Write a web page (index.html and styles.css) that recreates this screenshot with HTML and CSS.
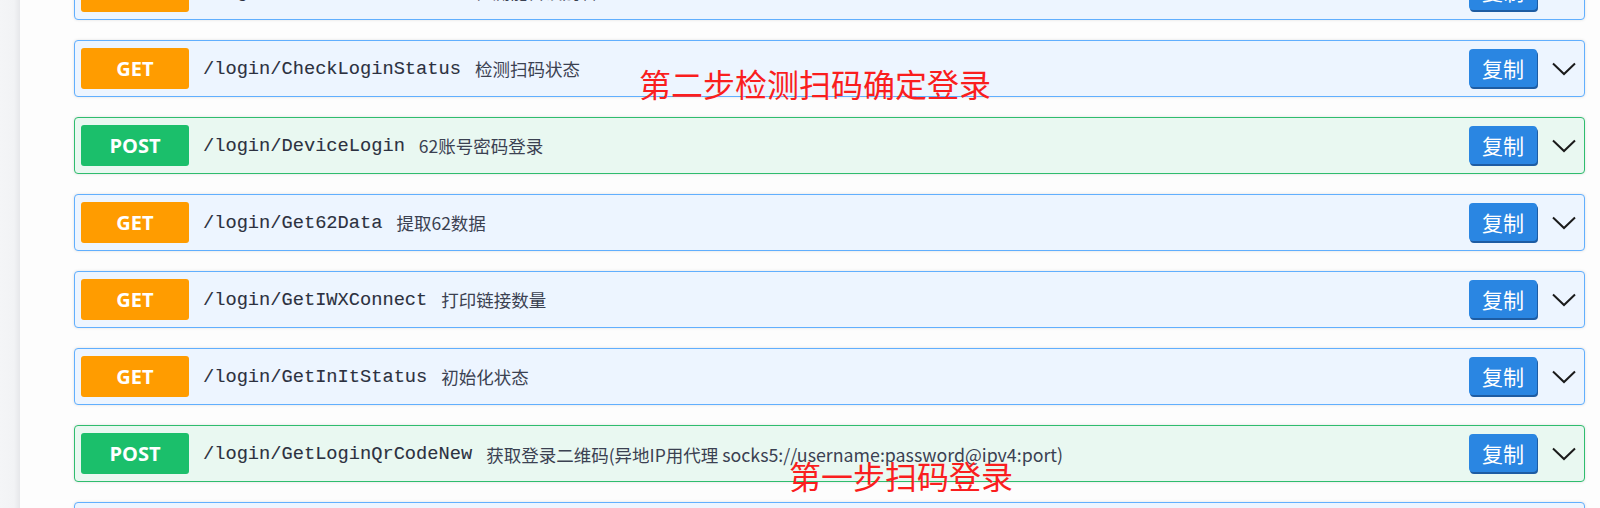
FILE: index.html
```html
<!DOCTYPE html>
<html lang="zh-CN">
<head>
<meta charset="utf-8">
<title>login API</title>
<link rel="stylesheet" href="styles.css">
</head>
<body>
<div class="page">
  <aside class="rail"></aside>
  <main class="content">
    <div class="ops">
      <div class="op op-get">
        <span class="method">GET</span>
        <span class="path">/login/CheckCanSetAlias</span>
        <span class="desc">检测能否设别名</span>
        <button class="copy">复制</button>
        <svg class="chev" viewBox="0 0 24 14" width="24" height="14"><path d="M1 1.5 L12 12 L23 1.5"/></svg>
      </div>
      <div class="op op-get">
        <span class="method">GET</span>
        <span class="path">/login/CheckLoginStatus</span>
        <span class="desc">检测扫码状态</span>
        <button class="copy">复制</button>
        <svg class="chev" viewBox="0 0 24 14" width="24" height="14"><path d="M1 1.5 L12 12 L23 1.5"/></svg>
      </div>
      <div class="op op-post">
        <span class="method">POST</span>
        <span class="path">/login/DeviceLogin</span>
        <span class="desc">62账号密码登录</span>
        <button class="copy">复制</button>
        <svg class="chev" viewBox="0 0 24 14" width="24" height="14"><path d="M1 1.5 L12 12 L23 1.5"/></svg>
      </div>
      <div class="op op-get">
        <span class="method">GET</span>
        <span class="path">/login/Get62Data</span>
        <span class="desc">提取62数据</span>
        <button class="copy">复制</button>
        <svg class="chev" viewBox="0 0 24 14" width="24" height="14"><path d="M1 1.5 L12 12 L23 1.5"/></svg>
      </div>
      <div class="op op-get">
        <span class="method">GET</span>
        <span class="path">/login/GetIWXConnect</span>
        <span class="desc">打印链接数量</span>
        <button class="copy">复制</button>
        <svg class="chev" viewBox="0 0 24 14" width="24" height="14"><path d="M1 1.5 L12 12 L23 1.5"/></svg>
      </div>
      <div class="op op-get">
        <span class="method">GET</span>
        <span class="path">/login/GetInItStatus</span>
        <span class="desc">初始化状态</span>
        <button class="copy">复制</button>
        <svg class="chev" viewBox="0 0 24 14" width="24" height="14"><path d="M1 1.5 L12 12 L23 1.5"/></svg>
      </div>
      <div class="op op-post">
        <span class="method">POST</span>
        <span class="path">/login/GetLoginQrCodeNew</span>
        <span class="desc">获取登录二维码(异地IP用代理 <span class="latin">socks5://username:password@ipv4:port)</span></span>
        <button class="copy">复制</button>
        <svg class="chev" viewBox="0 0 24 14" width="24" height="14"><path d="M1 1.5 L12 12 L23 1.5"/></svg>
      </div>
      <div class="op op-get">
        <span class="method">GET</span>
        <span class="path">/login/GetLoginStatus</span>
        <span class="desc">获取在线状态</span>
        <button class="copy">复制</button>
        <svg class="chev" viewBox="0 0 24 14" width="24" height="14"><path d="M1 1.5 L12 12 L23 1.5"/></svg>
      </div>
    </div>
  </main>
  <div class="note note-two">第二步检测扫码确定登录</div>
  <div class="note note-one">第一步扫码登录</div>
</div>
</body>
</html>
```

FILE: styles.css
```css
html, body {
  margin: 0;
  padding: 0;
  background: #ffffff;
  overflow: hidden;
}

.page {
  position: relative;
  display: flex;
  width: 1600px;
  height: 508px;
  overflow: hidden;
  font-family: "Noto Sans CJK SC", "Noto Sans", sans-serif;
}

.rail {
  flex: 0 0 20px;
  background: linear-gradient(to right, #f4f5f7 0%, #f2f3f5 70%, #e6e7ea 100%);
}

.content {
  flex: 1;
  padding: 0 15px 0 54px;
  background: #fdfdfd;
}

.ops {
  display: flex;
  flex-direction: column;
  gap: 20px;
  margin-top: -37px;
}

.op {
  box-sizing: border-box;
  height: 57px;
  display: flex;
  align-items: center;
  padding: 0 8px 0 6px;
  border: 1px solid #61affe;
  border-radius: 4px;
  background: #edf5ff;
  box-shadow: 0 0 3px rgba(0, 0, 0, 0.12);
}

.op-post {
  border-color: #2fbd6e;
  background: #e9f8f1;
}

.method {
  flex: 0 0 108px;
  height: 41px;
  display: flex;
  align-items: center;
  justify-content: center;
  border-radius: 3px;
  background: #ff9c00;
  color: #ffffff;
  font-family: "Open Sans", "Liberation Sans", sans-serif;
  font-weight: 700;
  font-size: 20px;
}

.op-post .method {
  background: #1bbf6b;
}

.path {
  padding: 0 14px 0 14px;
  font-family: "Liberation Mono", monospace;
  font-size: 18.7px;
  color: #2c3140;
  -webkit-text-stroke: 0.1px #2c3140;
  white-space: nowrap;
}

.desc {
  flex: 1;
  font-family: "Noto Sans CJK SC", sans-serif;
  font-size: 17.5px;
  color: #3b4151;
  white-space: nowrap;
}

.latin {
  font-size: 17.8px;
}

.copy {
  flex: 0 0 auto;
  width: 68px;
  height: 38px;
  margin-bottom: 2px;
  padding: 0;
  border: none;
  border-radius: 4px;
  background: #2a86e2;
  box-shadow: 1px 2px 0 #1d5ca3;
  color: #ffffff;
  font-family: "Noto Sans CJK SC", sans-serif;
  font-size: 21px;
  line-height: 38px;
}

.chev {
  flex: 0 0 24px;
  margin-left: 15px;
  fill: none;
  stroke: #1b1b1b;
  stroke-width: 2;
}

.note {
  position: absolute;
  font-family: "Noto Sans CJK SC", sans-serif;
  font-size: 32px;
  line-height: 1;
  color: #fa1e1e;
  white-space: nowrap;
}

.note-two {
  left: 639px;
  top: 67px;
}

.note-one {
  left: 789px;
  top: 459px;
}
```
